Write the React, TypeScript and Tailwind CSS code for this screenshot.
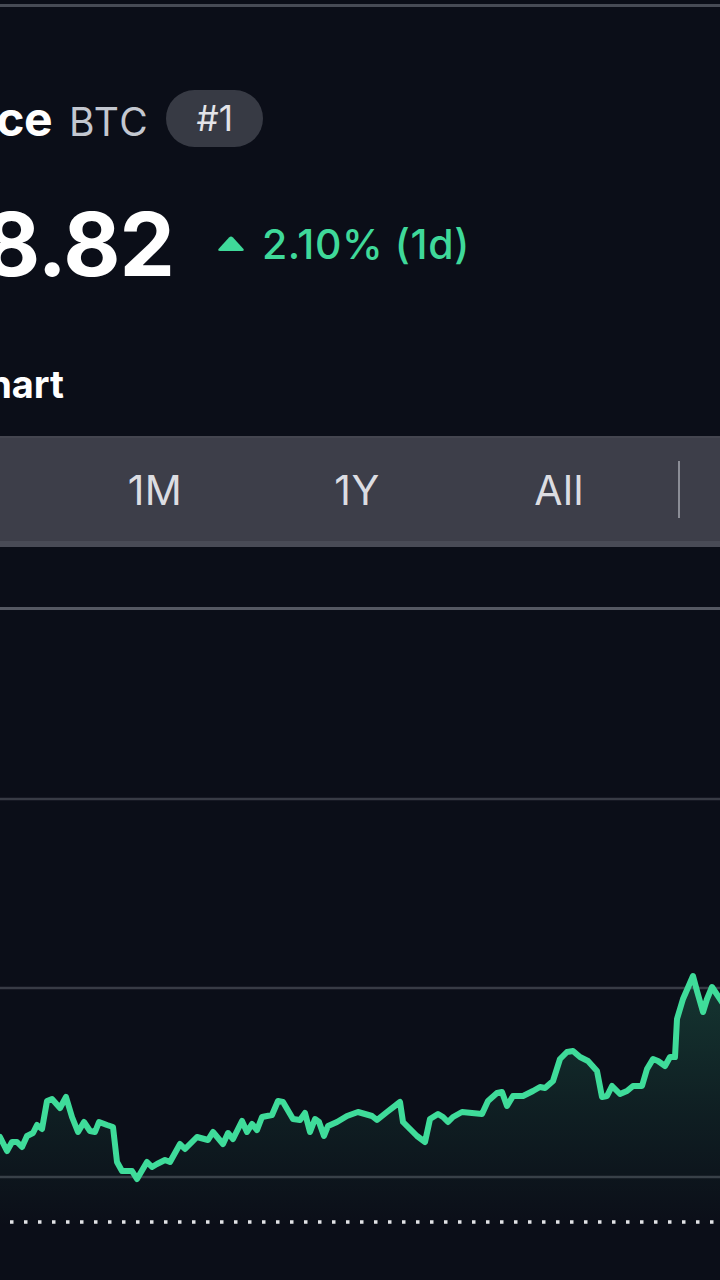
import React from "react";

const PTS =
  "-4,1140 0,1138 7,1152 12,1143 17,1143 22,1148 27,1137 33,1134 37,1126 42,1130 47,1102 52,1100 60,1109 66,1098 72,1118 78,1133 84,1123 90,1132 95,1133 99,1123 107,1126 113,1128 117,1163 122,1172 132,1172 137,1180 147,1163 152,1168 157,1165 165,1161 170,1163 180,1145 185,1150 197,1138 208,1141 213,1133 223,1145 228,1134 233,1140 242,1122 247,1133 252,1125 257,1131 262,1118 272,1116 278,1102 283,1103 293,1120 300,1121 305,1114 310,1133 315,1120 319,1123 324,1137 328,1127 337,1123 347,1117 358,1113 372,1117 377,1121 387,1113 400,1103 403,1123 410,1130 417,1137 425,1143 430,1120 438,1115 443,1118 448,1123 453,1118 462,1113 482,1115 488,1102 497,1094 502,1093 507,1107 513,1097 523,1097 533,1092 540,1088 545,1089 553,1082 560,1060 567,1053 573,1052 580,1058 588,1062 597,1072 602,1098 607,1097 612,1087 620,1095 627,1092 633,1087 642,1087 647,1070 653,1060 658,1062 665,1067 670,1058 675,1058 677,1020 683,1000 693,977 697,992 703,1013 707,1000 712,988 724,1006";

function Chart() {
  const area = `M ${PTS.split(" ").join(" L ")} L 724,1226 L -4,1226 Z`;
  return (
    <svg width="720" height="669" viewBox="0 611 720 669" className="block">
      <defs>
        <linearGradient id="fillg" x1="0" y1="975" x2="0" y2="1228" gradientUnits="userSpaceOnUse">
          <stop offset="0" stopColor="#3fd99a" stopOpacity="0.2" />
          <stop offset="0.55" stopColor="#3fd99a" stopOpacity="0.08" />
          <stop offset="1" stopColor="#3fd99a" stopOpacity="0" />
        </linearGradient>
      </defs>
      <line x1="0" y1="800" x2="720" y2="800" stroke="#383b45" strokeWidth="2.5" />
      <line x1="0" y1="989" x2="720" y2="989" stroke="#383b45" strokeWidth="2.5" />
      <line x1="0" y1="1178" x2="720" y2="1178" stroke="#383b45" strokeWidth="2.5" />
      <path d={area} fill="url(#fillg)" />
      <polyline
        points={PTS}
        fill="none"
        stroke="#3fdc9a"
        strokeWidth="6"
        strokeLinejoin="round"
        strokeLinecap="round"
      />
      <line
        x1="10"
        y1="1223"
        x2="720"
        y2="1223"
        stroke="#e2e3e6"
        strokeWidth="3.5"
        strokeDasharray="3.5 10.5"
      />
    </svg>
  );
}

export default function App() {
  return (
    <div
      className="w-[720px] h-[1280px] overflow-hidden bg-[#0b0e18] text-white"
      style={{ fontFamily: "Inter, 'Noto Sans', sans-serif" }}
    >
      <div className="mt-[4px] h-[3px] bg-[#474b55]" />

      {/* Title row */}
      <div className="mt-[83px] flex h-[57px] items-center">
        <div className="flex items-baseline">
          <div className="flex w-[52px] justify-end">
            <span className="whitespace-nowrap text-[48px] font-bold leading-none tracking-[-0.5px]">
              Bitcoin Price
            </span>
          </div>
          <span className="ml-[17px] text-[39px] leading-none tracking-[1.5px] text-[#c3c7d0]">BTC</span>
        </div>
        <div className="ml-[17px] flex h-[57px] w-[97px] items-center justify-center rounded-full bg-[#373a44] text-[35px] leading-none text-[#e3e4e9]">
          #1
        </div>
      </div>

      {/* Price row */}
      <div className="mt-[53px] flex h-[88px] items-center">
        <div className="flex w-[174px] justify-end">
          <span className="whitespace-nowrap text-[88px] font-bold leading-none tracking-[-1px]">
            $64,218.82
          </span>
        </div>
        <svg width="28" height="16" viewBox="0 0 28 16" className="ml-[43px]">
          <path d="M12 1.5 Q14 -0.5 16 1.5 L26.5 13 Q27.5 15 25 15 L3 15 Q0.5 15 1.5 13 Z" fill="#3fd99a" />
        </svg>
        <span className="ml-[17px] whitespace-nowrap text-[41px] font-medium leading-none tracking-[0.6px] text-[#3fd99a]">
          2.10% (1d)
        </span>
      </div>

      {/* Chart heading */}
      <div className="mt-[77px] flex w-[64px] justify-end">
        <span className="whitespace-nowrap text-[38px] font-bold leading-none">Bitcoin Price Chart</span>
      </div>

      {/* Tabs */}
      <div className="mt-[33px] flex h-[111px] items-center border-t-[2px] border-b-[6px] border-t-[#44454f] border-b-[#494b56] bg-[#3d3e49]">
        <div className="ml-[-148px] flex items-center">
          {["7D", "1M", "1Y", "All"].map((t) => (
            <div
              key={t}
              className="w-[202px] shrink-0 pt-[2px] text-center text-[41px] leading-none tracking-[0.5px] text-[#dcdde2]"
            >
              {t}
            </div>
          ))}
          <div className="ml-[18px] h-[57px] w-[2px] shrink-0 bg-[#8b8d96]" />
        </div>
      </div>

      {/* Chart */}
      <div className="mt-[60px] h-[3px] bg-[#555862]" />
      <Chart />
    </div>
  );
}
